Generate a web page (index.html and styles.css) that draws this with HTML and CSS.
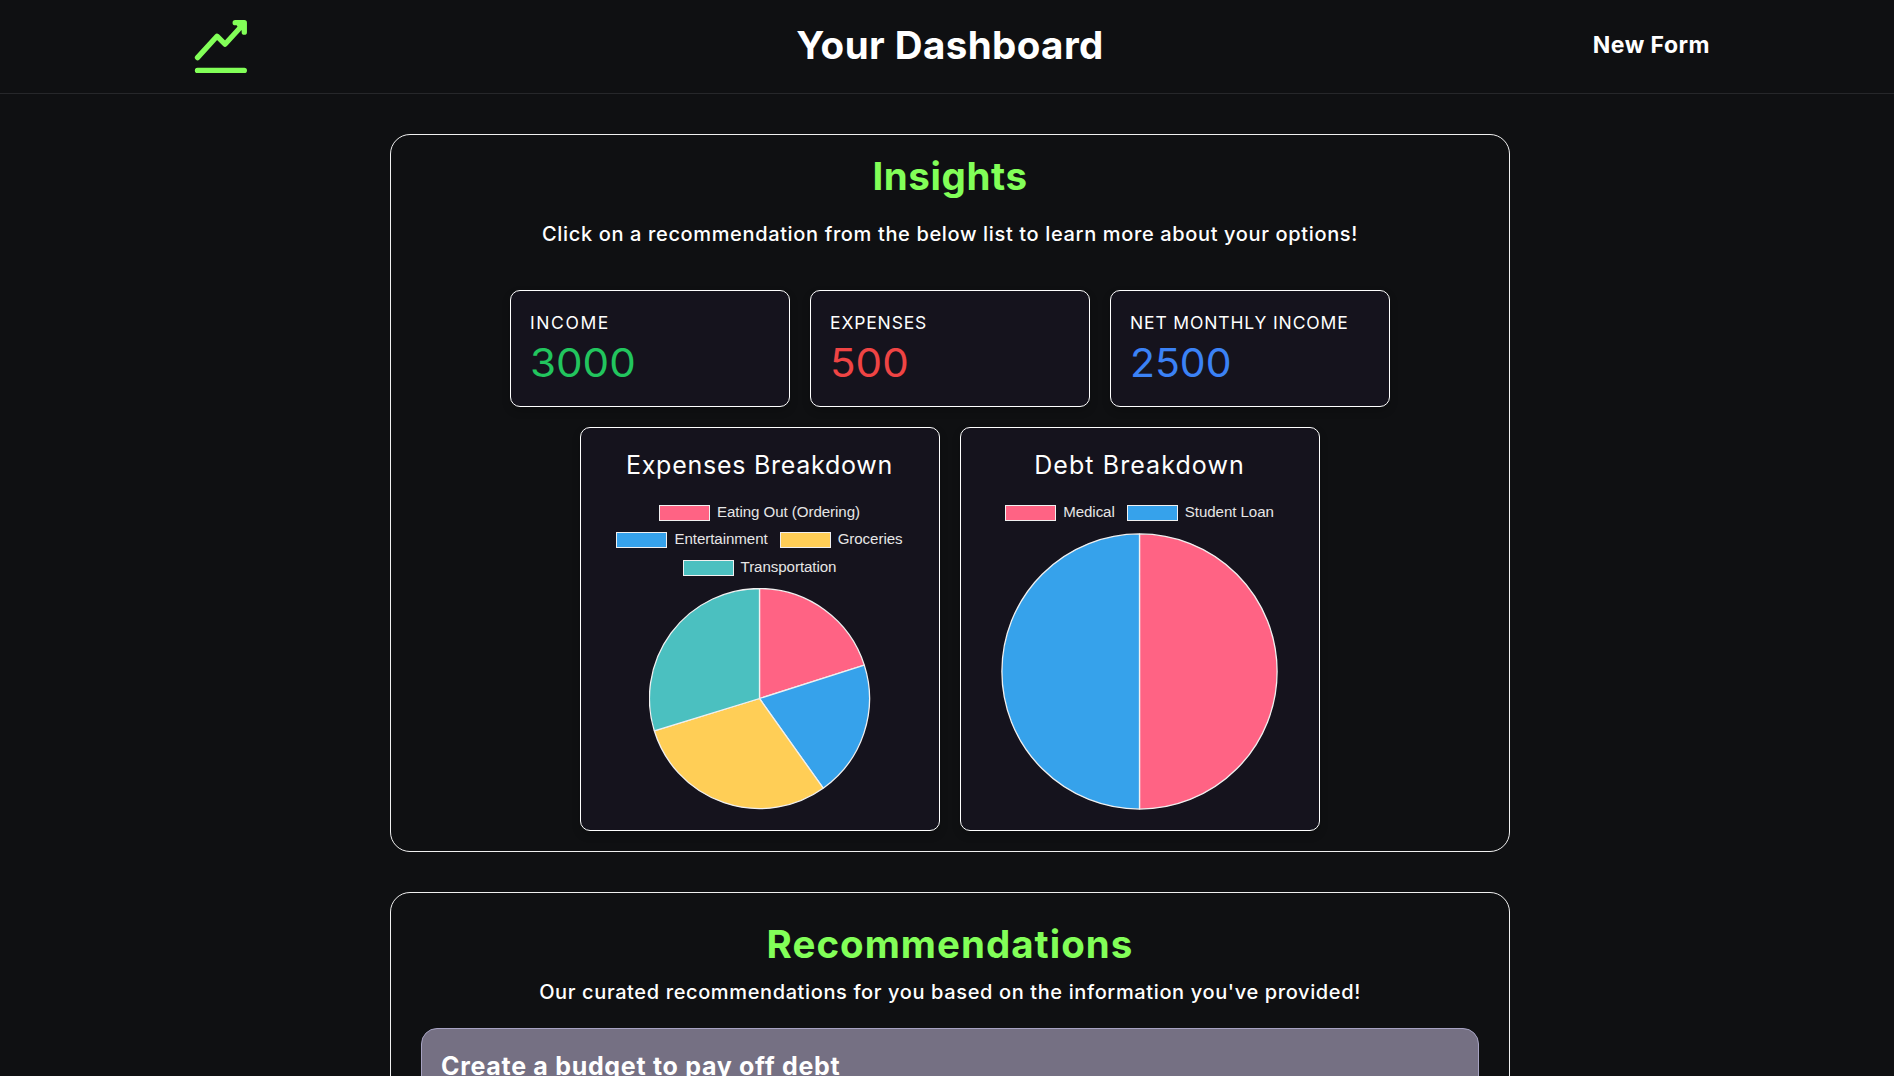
FILE: index.html
```
<!DOCTYPE html>
<html lang="en">
<head>
<meta charset="utf-8">
<title>Your Dashboard</title>
<link rel="stylesheet" href="styles.css">
</head>
<body>
<header class="header">
  <svg class="logo" viewBox="0 0 62 62" fill="none" stroke="currentColor" stroke-width="5.3" stroke-linecap="round" stroke-linejoin="round">
    <path d="M7.5 41.6 27 20.2 35 28.2 54.2 7.2M45.2 6.7H54.3V16.2M49.5 9 53 12"/>
    <path d="M7.5 54.4H54.3"/>
  </svg>
  <h1 class="title">Your Dashboard</h1>
  <a class="nav-link">New Form</a>
</header>
<main class="main">
  <section class="panel insights">
    <h2 class="heading heading-insights">Insights</h2>
    <p class="lead">Click on a recommendation from the below list to learn more about your options!</p>
    <div class="stats">
      <article class="card stat"><p class="label label-income">INCOME</p><p class="value income">3000</p></article>
      <article class="card stat"><p class="label">EXPENSES</p><p class="value expenses">500</p></article>
      <article class="card stat"><p class="label">NET MONTHLY INCOME</p><p class="value net">2500</p></article>
    </div>
    <div class="charts">
      <article class="card chart">
        <h3 class="chart-title">Expenses Breakdown</h3>
        <div class="legend">
          <div class="legend-row"><span class="key"><i class="swatch pink"></i><span class="key-text">Eating Out (Ordering)</span></span></div>
          <div class="legend-row"><span class="key"><i class="swatch blue"></i><span class="key-text">Entertainment</span></span><span class="key"><i class="swatch yellow"></i><span class="key-text">Groceries</span></span></div>
          <div class="legend-row"><span class="key"><i class="swatch teal"></i><span class="key-text">Transportation</span></span></div>
        </div>
        <svg class="pie" width="222" height="222" viewBox="-110.5 -110.5 222 222">
          <path class="slice-pink" d="M0 0V-110A110 110 0 0 1 104.8-33.4Z"/>
          <path class="slice-blue" d="M0 0 104.8-33.4A110 110 0 0 1 63.7 89.7Z"/>
          <path class="slice-yellow" d="M0 0 63.7 89.7A110 110 0 0 1-105.2 32.3Z"/>
          <path class="slice-teal" d="M0 0-105.2 32.3A110 110 0 0 1 0-110Z"/>
        </svg>
      </article>
      <article class="card chart">
        <h3 class="chart-title chart-title-debt">Debt Breakdown</h3>
        <div class="legend">
          <div class="legend-row"><span class="key"><i class="swatch pink"></i><span class="key-text">Medical</span></span><span class="key"><i class="swatch blue"></i><span class="key-text">Student Loan</span></span></div>
        </div>
        <svg class="pie" width="277" height="277" viewBox="-138.5 -138.5 277 277">
          <path class="slice-pink" d="M0 0V-137.6A137.6 137.6 0 0 1 0 137.6Z"/>
          <path class="slice-blue" d="M0 0V137.6A137.6 137.6 0 0 1 0-137.6Z"/>
        </svg>
      </article>
    </div>
  </section>
  <section class="panel recommendations">
    <h2 class="heading heading-rec">Recommendations</h2>
    <p class="lead lead-rec">Our curated recommendations for you based on the information you've provided!</p>
    <article class="rec">
      <h3 class="rec-title">Create a budget to pay off debt</h3>
    </article>
  </section>
</main>
</body>
</html>
```
FILE: styles.css
```
* { box-sizing: border-box; margin: 0; padding: 0; }
html { height: 1076px; overflow: hidden; background: #0f1012; }
body {
  width: 1900px;
  height: 1076px;
  overflow: hidden;
  font-family: Inter, "Open Sans", sans-serif;
  color: #fff;
}

.header {
  height: 94px;
  padding: 0 190px;
  display: grid;
  grid-template-columns: 1fr auto 1fr;
  align-items: center;
  border-bottom: 1px solid #26272a;
}
.logo { width: 62px; height: 62px; color: #82ff58; }
.title {
  font-size: 38.5px;
  font-weight: 700;
  line-height: 48px;
  letter-spacing: .42px;
  padding-bottom: 4px;
}
.nav-link {
  justify-self: end;
  font-size: 23px;
  font-weight: 700;
  line-height: 30px;
  letter-spacing: .48px;
  padding-bottom: 4px;
}

.main {
  width: 1120px;
  margin: 40px auto 0;
  display: flex;
  flex-direction: column;
  gap: 40px;
}
.panel { border: 1px solid #f0f0f0; border-radius: 20px; text-align: center; }
.insights { padding: 17px 0 20px; }
.recommendations { padding: 27px 30px 30px; }
.heading { font-size: 38.5px; font-weight: 700; line-height: 48px; color: #82ff58; }
.heading-insights { letter-spacing: .6px; }
.heading-rec { letter-spacing: 1.02px; }
.lead { margin-top: 19px; font-size: 20px; font-weight: 500; line-height: 30px; letter-spacing: .64px; }
.lead-rec { margin-top: 9px; letter-spacing: .62px; }

.stats, .charts { display: flex; justify-content: center; gap: 20px; }
.stats { margin-top: 41px; }
.charts { margin-top: 20px; }
.card {
  background: #15131d;
  border: 1px solid #fff;
  border-radius: 10px;
  box-shadow: 0 4px 8px rgba(0, 0, 0, .2);
}
.stat { width: 280px; height: 117px; padding: 20px 19px; text-align: left; }
.label { font-size: 17.5px; line-height: 24px; letter-spacing: .86px; white-space: nowrap; }
.label-income { letter-spacing: 1.6px; }
.value {
  margin-top: 4px;
  font-size: 39px;
  font-weight: 400;
  line-height: 48px;
  transform-origin: left;
  transform: scaleX(1.08);
}
.income { color: #22c55e; }
.expenses { color: #ef4444; }
.net { color: #3b82f6; transform: scaleX(1.05); }

.chart {
  width: 360px;
  height: 404px;
  padding: 19px 1px 0 0;
  display: flex;
  flex-direction: column;
  align-items: center;
}
.chart-title { font-size: 25px; font-weight: 400; line-height: 36px; letter-spacing: .74px; }
.chart-title-debt { letter-spacing: 1.07px; }
.legend { margin-top: 16px; }
.legend-row { height: 27.5px; display: flex; justify-content: center; align-items: center; gap: 12px; }
.key { display: flex; align-items: center; gap: 7px; }
.swatch { width: 51px; height: 16px; border: 1px solid #f0f0f0; }
.key-text {
  font: 15.1px/18px "Liberation Sans", Arial, sans-serif;
  letter-spacing: -.06px;
  color: #e6e6e6;
  padding-bottom: 2px;
}
.pink { background: #ff6384; }
.blue { background: #36a2eb; }
.yellow { background: #ffce56; }
.teal { background: #4bc0c0; }
.pie { margin-top: 6px; display: block; stroke: #f0f0f0; stroke-width: 1.3; stroke-linejoin: bevel; }
.slice-pink { fill: #ff6384; }
.slice-blue { fill: #36a2eb; }
.slice-yellow { fill: #ffce56; }
.slice-teal { fill: #4bc0c0; }

.rec {
  margin-top: 21px;
  height: 160px;
  padding: 19px;
  text-align: left;
  background: #757083;
  border: 1px solid #a6a2c2;
  border-radius: 16px;
}
.rec-title { font-size: 25px; font-weight: 700; line-height: 36px; letter-spacing: .7px; }
```
